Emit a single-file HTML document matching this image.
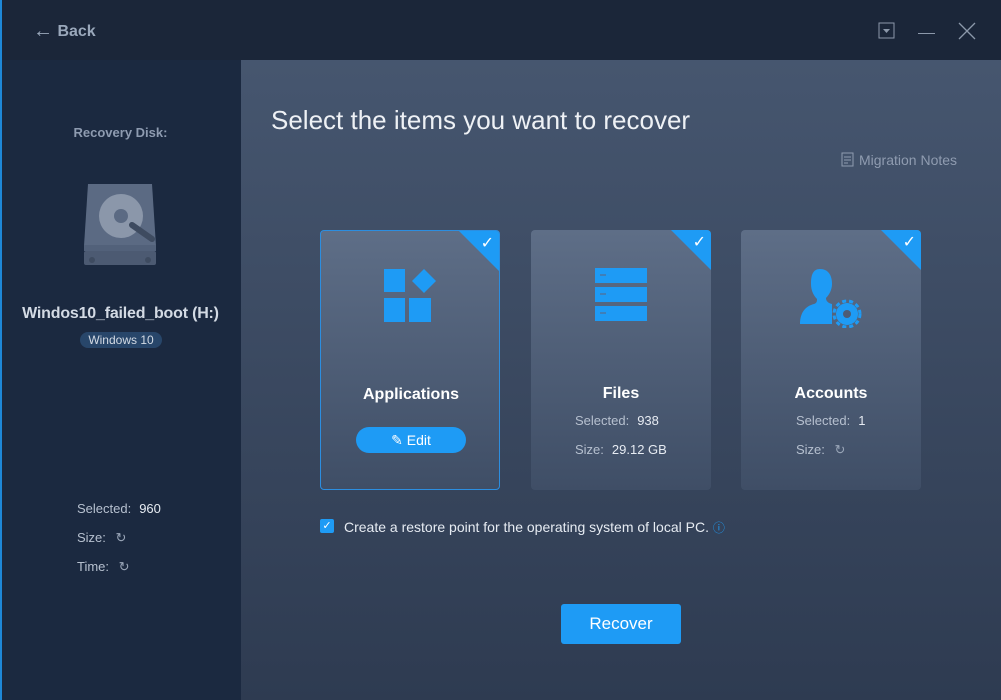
<!DOCTYPE html>
<html><head><style>
*{margin:0;padding:0;box-sizing:border-box}
body{width:1001px;height:700px;overflow:hidden;background:#1b2940;font-family:"Liberation Sans",sans-serif;position:relative}
.abs{position:absolute}
.top{left:0;top:0;width:1001px;height:60px;background:#1b2639}
.side{left:0;top:60px;width:241px;height:640px;background:#1b2940}
.main{left:241px;top:60px;width:760px;height:640px;background:linear-gradient(#46566f,#2e3b51)}
.edge{left:0;top:0;width:2px;height:700px;background:#1e88d8}
.card{width:180px;height:260px;border-radius:4px;background:linear-gradient(#5e6e87,#3f4e66);overflow:hidden}
.card.sel{border:1px solid #2c8ee0}
.tri{right:0;top:0;width:0;height:0;border-top:40px solid #1e9bf5;border-left:40px solid transparent}
.ck{right:5px;top:2px;color:#fff;font-size:16px}
.t{color:#fff;font-size:16px;font-weight:bold;width:180px;text-align:center;top:155px;left:0}
.s{color:#b6c0cf;font-size:13px}
.s b{color:#e6ebf2;font-weight:normal;margin-left:8px}
</style></head><body>
<div class="abs top"></div>
<div class="abs side"></div>
<div class="abs main"></div>
<div class="abs edge"></div>
<div class="abs" style="left:33px;top:20px;color:#9aa8bb;font-size:16px;font-weight:bold"><span style="font-size:20px;font-weight:normal;vertical-align:-1px">&#8592;</span> Back</div>
<svg class="abs" style="left:878px;top:22px" width="18" height="18"><rect x="1" y="1" width="15" height="15" fill="none" stroke="#8c98aa"/><path d="M5 7h7l-3.5 4z" fill="#8c98aa"/></svg>
<div class="abs" style="left:918px;top:33px;width:17px;height:1px;background:#8c98aa"></div>
<svg class="abs" style="left:958px;top:22px" width="18" height="18"><path d="M1 1L17 17M17 1L1 17" stroke="#8c98aa" stroke-width="1.3"/></svg>

<div class="abs" style="left:0;width:241px;text-align:center;top:125px;color:#8e9bb0;font-size:13px;font-weight:bold">Recovery Disk:</div>
<svg class="abs" style="left:82px;top:181px" width="76" height="85"><path d="M6 3h64l4 62H2z" fill="#5b6a83" rx="4"/><rect x="2" y="70" width="72" height="14" rx="2" fill="#4c5a72"/><rect x="2" y="64" width="72" height="6" fill="#52617a"/><circle cx="39" cy="35" r="22" fill="#8b97aa"/><circle cx="39" cy="35" r="7" fill="#5b6a83"/><path d="M50 44l20 14" stroke="#3e4b60" stroke-width="6" stroke-linecap="round"/><circle cx="10" cy="79" r="3" fill="#3e4b60"/><circle cx="66" cy="79" r="3" fill="#3e4b60"/></svg>
<div class="abs" style="left:0;width:241px;text-align:center;top:305px;color:#d3dae4;font-size:16px;font-weight:bold;letter-spacing:-0.2px">Windos10_failed_boot (H:)</div>
<div class="abs" style="left:80px;top:332px;width:82px;height:16px;border-radius:8px;background:#28466a;color:#d3dae4;font-size:12px;text-align:center;line-height:16px">Windows 10</div>
<div class="abs s" style="left:77px;top:501px">Selected:<b>960</b></div>
<div class="abs s" style="left:77px;top:530px">Size: <span style="color:#9aa6b8;margin-left:6px">&#x21bb;</span></div>
<div class="abs s" style="left:77px;top:559px">Time: <span style="color:#9aa6b8;margin-left:6px">&#x21bb;</span></div>

<div class="abs" style="left:271px;top:105px;color:#eef1f5;font-size:26px">Select the items you want to recover</div>
<div class="abs" style="left:841px;top:152px;color:#8f9cb0;font-size:14px"><svg width="13" height="15" style="vertical-align:-2px;margin-right:5px"><rect x="1" y="1" width="11" height="13" fill="none" stroke="#8f9cb0"/><path d="M3 5h7M3 8h7M3 11h4" stroke="#8f9cb0"/></svg>Migration Notes</div>

<div class="abs card sel" style="left:320px;top:230px">
<div class="abs tri"></div><div class="abs ck">&#10003;</div>
<svg class="abs" style="left:62px;top:36px" width="56" height="56"><rect x="1" y="2" width="21" height="23" fill="#1e9bf5"/><rect x="1" y="31" width="21" height="24" fill="#1e9bf5"/><rect x="26" y="31" width="22" height="24" fill="#1e9bf5"/><path d="M41 2l12 12-12 12-12-12z" fill="#1e9bf5"/></svg>
<div class="abs t" style="top:155px">Applications</div>
<div class="abs" style="left:35px;top:196px;width:110px;height:26px;border-radius:13px;background:#1e9bf5;color:#fff;font-size:14px;text-align:center;line-height:26px">&#9998; Edit</div>
</div>
<div class="abs card" style="left:531px;top:230px">
<div class="abs tri"></div><div class="abs ck">&#10003;</div>
<svg class="abs" style="left:63px;top:37px" width="54" height="56"><rect x="1" y="1" width="52" height="15" fill="#1e9bf5"/><rect x="1" y="20" width="52" height="15" fill="#1e9bf5"/><rect x="1" y="39" width="52" height="15" fill="#1e9bf5"/><path d="M6 8h6M6 27h6M6 46h6" stroke="#3f7fb8" stroke-width="2"/></svg>
<div class="abs t">Files</div>
<div class="abs s" style="left:44px;top:183px">Selected:<b>938</b></div>
<div class="abs s" style="left:44px;top:212px">Size:<b>29.12 GB</b></div>
</div>
<div class="abs card" style="left:741px;top:230px">
<div class="abs tri"></div><div class="abs ck">&#10003;</div>
<svg class="abs" style="left:57px;top:36px" width="66" height="62"><path d="M22 3c8 0 12 6 12 15 0 6-3 11-6 14 0 3 2 5 6 6v20H2c0-12 6-18 14-20 3-1 3-3 3-5-3-3-6-8-6-15C13 9 15 3 22 3z" fill="#1e9bf5"/><circle cx="49" cy="48" r="11" fill="#1e9bf5"/><circle cx="49" cy="48" r="4" fill="#4d5c75"/><circle cx="49" cy="48" r="13" fill="none" stroke="#1e9bf5" stroke-width="3" stroke-dasharray="4 3"/></svg>
<div class="abs t">Accounts</div>
<div class="abs s" style="left:55px;top:183px">Selected:<b>1</b></div>
<div class="abs s" style="left:55px;top:212px">Size: <span style="color:#9aa6b8;margin-left:6px">&#x21bb;</span></div>
</div>

<div class="abs" style="left:320px;top:519px;width:14px;height:14px;background:#1e9bf5;border-radius:2px;color:#fff;font-size:11px;text-align:center;line-height:14px">&#10003;</div>
<div class="abs" style="left:344px;top:519px;color:#e6ebf2;font-size:14px">Create a restore point for the operating system of local PC. <span style="color:#1e9bf5;font-size:12px">&#9432;</span></div>
<div class="abs" style="left:561px;top:604px;width:120px;height:40px;border-radius:3px;background:#1e9bf5;color:#fff;font-size:17px;text-align:center;line-height:40px">Recover</div>
</body></html>
